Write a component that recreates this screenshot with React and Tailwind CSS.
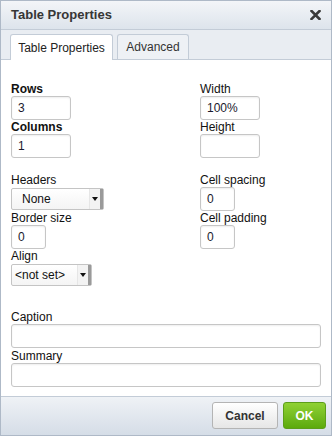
import React from "react";

function Field({ label, bold, value, width, className }) {
  return (
    <div className={className}>
      <div className={`h-[14px] leading-[14px] text-[12px] text-[#111] ${bold ? "font-bold" : ""}`}>
        {label}
      </div>
      <div
        className={`h-[24px] ${width} rounded-[3px] border border-[#c6c6c6] bg-white pl-[6px] text-[12px] leading-[22px] text-[#1a1a2e] shadow-[inset_0_1px_2px_rgba(0,0,0,0.07)]`}
      >
        {value}
      </div>
    </div>
  );
}

function Select({ label, value, width, pad }) {
  return (
    <div>
      <div className="h-[14px] leading-[14px] text-[12px] text-[#111]">{label}</div>
      <div
        className={`my-px flex h-[22px] ${width} rounded-[2px] border border-[#c4c4c4] bg-gradient-to-b from-white to-[#f4f4f4] text-[12px] text-[#111]`}
      >
        <div className={`flex-1 leading-[20px] ${pad}`}>{value}</div>
        <div className="flex w-[14px] items-center justify-center border-r-[3px] border-l border-l-[#e6e6e6] border-r-[#9a9a9a] bg-[#f3f3f3]">
          <svg width="6" height="4" viewBox="0 0 6 4">
            <path d="M0 0 H6 L3 4 Z" fill="#111" />
          </svg>
        </div>
      </div>
    </div>
  );
}

export default function App() {
  return (
    <div
      className="flex h-[436px] w-[332px] flex-col border border-[#aeb9c7] bg-white"
      style={{ fontFamily: '"Liberation Sans", Arial, sans-serif' }}
    >
      {/* title bar */}
      <div className="flex h-[29px] items-center justify-between border-b border-[#c3ccd7] bg-gradient-to-b from-[#f3f5f8] to-[#dde4ec] pl-[10px] pr-[10px]">
        <span className="text-[13px] font-bold text-[#363636]">Table Properties</span>
        <svg width="11" height="10" viewBox="0 0 11 10" className="mb-px">
          <path d="M1.5 1 L9.5 9 M9.5 1 L1.5 9" stroke="#3a3a3a" strokeWidth="2.6" strokeLinecap="square" />
        </svg>
      </div>

      {/* tabs */}
      <div className="flex h-[30px] items-end gap-[4px] border-b border-[#c3ccd7] bg-[#e9edf2] pl-[9px]">
        <div className="-mb-px flex h-[26px] w-[103px] items-center justify-center rounded-t-[3px] border border-b-0 border-[#c3ccd7] bg-white text-[12px] text-[#222]">
          Table Properties
        </div>
        <div className="flex h-[25px] w-[72px] items-center justify-center rounded-t-[3px] border border-b-0 border-[#c3ccd7] bg-[#eef1f5] text-[12px] text-[#333]">
          Advanced
        </div>
      </div>

      {/* content */}
      <div className="flex flex-1 flex-col px-[10px] pt-[22px]">
        <div className="flex">
          <div className="w-[189px]">
            <Field label="Rows" bold value="3" width="w-[60px]" />
            <Field label="Columns" bold value="1" width="w-[60px]" />
            <div className="mt-[15px]">
              <Select label="Headers" value="None" width="w-[93px]" pad="pl-[10px]" />
            </div>
            <Field label="Border size" value="0" width="w-[35px]" />
            <Select label="Align" value="<not set>" width="w-[81px]" pad="pl-[3px]" />
          </div>
          <div>
            <Field label="Width" value="100%" width="w-[60px]" />
            <Field label="Height" value="" width="w-[60px]" />
            <div className="mt-[15px]">
              <Field label="Cell spacing" value="0" width="w-[35px]" />
            </div>
            <Field label="Cell padding" value="0" width="w-[35px]" />
          </div>
        </div>
        <div className="mt-[23px]">
          <Field label="Caption" value="" width="w-full" />
          <Field label="Summary" value="" width="w-full" className="mt-px" />
        </div>
      </div>

      {/* footer */}
      <div className="flex h-[39px] items-start justify-end gap-[5px] border-t border-[#c3ccd7] bg-gradient-to-b from-[#eff2f6] to-[#d5dde7] pr-[5px] pt-[5px]">
        <button className="h-[27px] w-[66px] rounded-[3px] border border-[#b4b4b4] bg-gradient-to-b from-white to-[#e6e6e6] text-[12px] font-bold text-[#333]">
          Cancel
        </button>
        <button className="h-[27px] w-[43px] rounded-[3px] border border-[#5c9e1a] bg-gradient-to-b from-[#8fd133] to-[#5caa0a] text-[12px] font-bold text-white">
          OK
        </button>
      </div>
    </div>
  );
}
